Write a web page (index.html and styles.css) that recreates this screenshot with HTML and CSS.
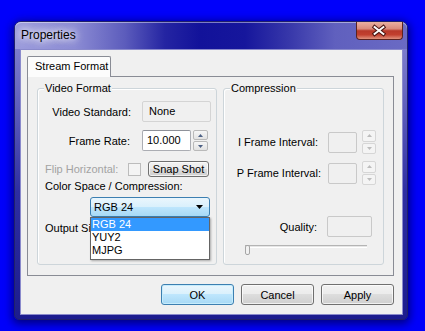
FILE: index.html
```html
<!DOCTYPE html>
<html>
<head>
    <title>Properties</title>
    <meta name="viewport" content="width=device-width, initial-scale=1">
    <link rel="stylesheet" href="styles.css">
</head>
<body>
    <div class="window">
        <div class="titlebar">
            <span class="title">Properties</span>
            <div class="close">
                <svg width="47" height="18" viewBox="0 0 47 18">
                    <path d="M19 5 L28 12 M28 5 L19 12" stroke="#4a1512" stroke-width="4" stroke-linecap="square"/>
                    <path d="M19 5 L28 12 M28 5 L19 12" stroke="#fff" stroke-width="2" stroke-linecap="square"/>
                </svg>
            </div>
        </div>

        <div class="client">
            <div class="tabs">
                <div class="tab">Stream Format</div>
            </div>

            <div class="panel">
                <div class="group video">
                    <div class="legend">Video Format</div>

                    <div class="row r1">
                        <span class="lbl std">Video Standard:</span>
                        <div class="field ro">None</div>
                    </div>

                    <div class="row r2">
                        <span class="lbl rate">Frame Rate:</span>
                        <div class="field edit">10.000</div>
                        <div class="spin">
                            <span><svg width="5" height="3"><path d="M0 3 L2.5 0 L5 3 Z" fill="#4d6185"/></svg></span>
                            <span><svg width="5" height="3"><path d="M0 0 L2.5 3 L5 0 Z" fill="#4d6185"/></svg></span>
                        </div>
                    </div>

                    <div class="row r3">
                        <span class="flip">Flip Horizontal:</span>
                        <span class="check"></span>
                        <button class="btn snap">Snap Shot</button>
                    </div>

                    <div class="text r4">Color Space / Compression:</div>

                    <div class="row r5">
                        <div class="combo">
                            <span>RGB 24</span>
                            <svg width="7" height="4"><path d="M0 0 L7 0 L3.5 4 Z" fill="#000"/></svg>
                            <div class="list">
                                <div class="sel">RGB 24</div>
                                <div>YUY2</div>
                                <div>MJPG</div>
                            </div>
                        </div>
                    </div>

                    <div class="text r6">Output Size:</div>
                </div>

                <div class="group comp">
                    <div class="legend">Compression</div>

                    <div class="row ri">
                        <span class="lbl iframe">I Frame Interval:</span>
                        <div class="field dis small"></div>
                        <div class="spin off">
                            <span><svg width="5" height="3"><path d="M0 3 L2.5 0 L5 3 Z" fill="#bcbcbc"/></svg></span>
                            <span><svg width="5" height="3"><path d="M0 0 L2.5 3 L5 0 Z" fill="#bcbcbc"/></svg></span>
                        </div>
                    </div>

                    <div class="row rp">
                        <span class="lbl pframe">P Frame Interval:</span>
                        <div class="field dis small"></div>
                        <div class="spin off">
                            <span><svg width="5" height="3"><path d="M0 3 L2.5 0 L5 3 Z" fill="#bcbcbc"/></svg></span>
                            <span><svg width="5" height="3"><path d="M0 0 L2.5 3 L5 0 Z" fill="#bcbcbc"/></svg></span>
                        </div>
                    </div>

                    <div class="row rq">
                        <span class="lbl quality">Quality:</span>
                        <div class="field dis wide"></div>
                    </div>

                    <div class="slider">
                        <div class="track"></div>
                        <div class="thumb"></div>
                    </div>
                </div>
            </div>

            <div class="buttons">
                <button class="btn default">OK</button>
                <button class="btn">Cancel</button>
                <button class="btn">Apply</button>
            </div>
        </div>
    </div>
</body>
</html>
```

FILE: styles.css
```css
* {
    box-sizing: border-box;
}
body {
    margin: 0;
    width: 425px;
    height: 331px;
    overflow: hidden;
    position: relative;
    background: #0000fb;
    font-family: "Liberation Sans", Arial, sans-serif;
    font-size: 11px;
    color: #000;
}

/* window frame */
.window {
    position: absolute;
    left: 14px;
    top: 21px;
    width: 394px;
    height: 299px;
    display: flex;
    flex-direction: column;
    border: 1px solid #20206a;
    border-radius: 7px 7px 5px 5px;
    background: linear-gradient(to bottom, #8a8ad4 0, #6c6cc4 60px, #2e2ea2 170px, #1c1c8e 100%);
    box-shadow: 0 2px 9px 2px rgba(0, 0, 90, 0.75);
}
.titlebar {
    height: 27px;
    display: flex;
    align-items: flex-start;
    border-radius: 6px 6px 0 0;
    background: linear-gradient(90deg, #9c9cdc 0, #8c8cd4 60px, #5c5cbc 110px, #2424a2 150px, #12129a 185px, #16169c 230px, #3838aa 275px, #6060be 320px, #6a6ac4 100%);
    box-shadow: inset 0 1px 0 rgba(255, 255, 255, 0.45);
}
.title {
    padding: 6px 0 0 6px;
    font-size: 12px;
    line-height: 15px;
    color: #000;
    text-shadow: 0 0 6px #fff, 0 0 10px rgba(255, 255, 255, 0.9), 0 0 14px rgba(255, 255, 255, 0.7);
}
.close {
    margin-left: auto;
    margin-right: 4px;
    width: 47px;
    height: 18px;
    border: 1px solid #5a2320;
    border-top: 0;
    border-radius: 0 0 4px 4px;
    background: linear-gradient(#e9b0a2 0, #d98b7b 40%, #b8392a 52%, #c2402f 75%, #e0917c 100%);
    display: flex;
}
.close svg {
    margin-left: -1px;
}

/* client area */
.client {
    flex: 1;
    margin: 0 4px 4px 5px;
    background: #f0f0f0;
    border: 1px solid #8a8acc;
}
.tabs {
    display: flex;
    padding: 6px 0 0 6px;
}
.tab {
    position: relative;
    z-index: 1;
    width: 84px;
    height: 21px;
    margin-bottom: -1px;
    padding-left: 7px;
    line-height: 19px;
    background: #fcfcfc;
    border: 1px solid #898c95;
    border-bottom: 0;
    border-radius: 2px 2px 0 0;
}
.panel {
    margin-left: 6px;
    width: 367px;
    height: 200px;
    border: 1px solid #898c95;
    background: #f0f0f0;
    display: flex;
    gap: 6px;
    padding: 11px 0 0 9px;
}

/* group boxes */
.group {
    height: 177px;
    border: 1px solid #cdd5da;
    border-radius: 3px;
    box-shadow: inset 1px 1px 0 #fff;
}
.video {
    width: 180px;
}
.comp {
    width: 161px;
}
.legend {
    display: table;
    margin: -8px 0 0 6px;
    padding: 0 1px;
    line-height: 14px;
    background: #f0f0f0;
}
.row {
    display: flex;
    align-items: center;
}
.lbl {
    flex: none;
    text-align: right;
}
.text {
    padding-left: 7px;
    line-height: 14px;
}

/* video format rows */
.r1 {
    margin-top: 6px;
    height: 21px;
}
.std {
    width: 93px;
    margin-right: 11px;
}
.r2 {
    margin-top: 8px;
    height: 21px;
}
.rate {
    width: 92px;
    margin-right: 12px;
}
.r3 {
    margin-top: 10px;
    height: 16px;
}
.flip {
    width: 90px;
    padding-left: 7px;
    color: #a3a3a3;
}
.check {
    width: 13px;
    height: 13px;
    margin-right: 7px;
    border: 1px solid #bcbcbc;
    background: #f4f4f4;
}
.r4 {
    margin-top: 2px;
}
.r5 {
    margin-top: 4px;
}
.r6 {
    margin-top: 4px;
}

/* fields */
.field {
    height: 21px;
    line-height: 19px;
    border: 1px solid #abadb3;
    border-top-color: #8e9199;
    border-radius: 2px;
    background: #fff;
}
.ro {
    width: 69px;
    padding-left: 6px;
    background: #f0f0f0;
    border-color: #d4d4d4;
}
.edit {
    width: 49px;
    padding-left: 4px;
}
.dis {
    background: #f0f0f0;
    border-color: #c9c9c9;
}
.small {
    width: 29px;
}
.wide {
    width: 45px;
}
.spin {
    width: 15px;
    height: 21px;
    margin-left: 2px;
    display: flex;
    flex-direction: column;
    gap: 1px;
}
.spin span {
    flex: 1;
    display: flex;
    align-items: center;
    justify-content: center;
    border: 1px solid #b9b9b9;
    border-radius: 2px;
    background: linear-gradient(#f6f6f6, #e2e2e2);
}
.spin.off {
    width: 14px;
    height: 24px;
    margin-left: 5px;
}
.spin.off span {
    border-color: #d6d6d6;
    background: #f4f4f4;
}

/* combo box */
.combo {
    position: relative;
    margin-left: 52px;
    width: 120px;
    height: 20px;
    padding: 0 6px 0 3px;
    display: flex;
    align-items: center;
    justify-content: space-between;
    border: 1px solid #3c7fb1;
    border-radius: 3px;
    background: linear-gradient(#eaf6fd 0, #d9f0fc 50%, #bee6fd 50%, #a7d9f5 100%);
}
.list {
    position: absolute;
    left: -1px;
    top: 19px;
    z-index: 2;
    width: 120px;
    padding-bottom: 2px;
    border: 1px solid #646464;
    background: #fff;
    box-shadow: 1px 1px 2px rgba(0, 0, 0, 0.3);
}
.list div {
    line-height: 13px;
    padding-left: 1px;
}
.list .sel {
    background: #3399ff;
    color: #fff;
}

/* compression rows */
.ri {
    margin-top: 35px;
    height: 24px;
}
.iframe {
    width: 94px;
    margin-right: 10px;
}
.rp {
    margin-top: 7px;
    height: 24px;
}
.pframe {
    width: 97px;
    margin-right: 7px;
}
.rq {
    margin-top: 31px;
    height: 21px;
}
.quality {
    width: 93px;
    margin-right: 10px;
}
.slider {
    position: relative;
    margin: 8px 0 0 21px;
    width: 122px;
    height: 11px;
}
.track {
    margin-top: 4px;
    height: 3px;
    border-top: 1px solid #b4b4b4;
    border-bottom: 1px solid #fff;
    background: #e6e6e6;
}
.thumb {
    position: absolute;
    left: 0;
    top: 0;
    width: 5px;
    height: 10px;
    border: 1px solid #a6a6a6;
    border-radius: 2px;
    background: #f2f2f2;
}

/* buttons */
.btn {
    width: 73px;
    height: 21px;
    padding: 0;
    font: inherit;
    color: #000;
    border: 1px solid #707070;
    border-radius: 3px;
    background: linear-gradient(#f2f2f2 0, #ebebeb 50%, #dddddd 50%, #cfcfcf 100%);
    box-shadow: inset 0 0 0 1px rgba(255, 255, 255, 0.7);
}
.btn.default {
    border-color: #3c7fb1;
    background: linear-gradient(#eaf6fd 0, #d9f0fc 50%, #bee6fd 50%, #a7d9f5 100%);
    box-shadow: inset 0 0 0 1px #c6ecfc;
}
.snap {
    width: 61px;
    height: 16px;
    line-height: 13px;
}
.buttons {
    display: flex;
    justify-content: flex-end;
    gap: 7px;
    padding: 8px 8px 0 0;
}
```
